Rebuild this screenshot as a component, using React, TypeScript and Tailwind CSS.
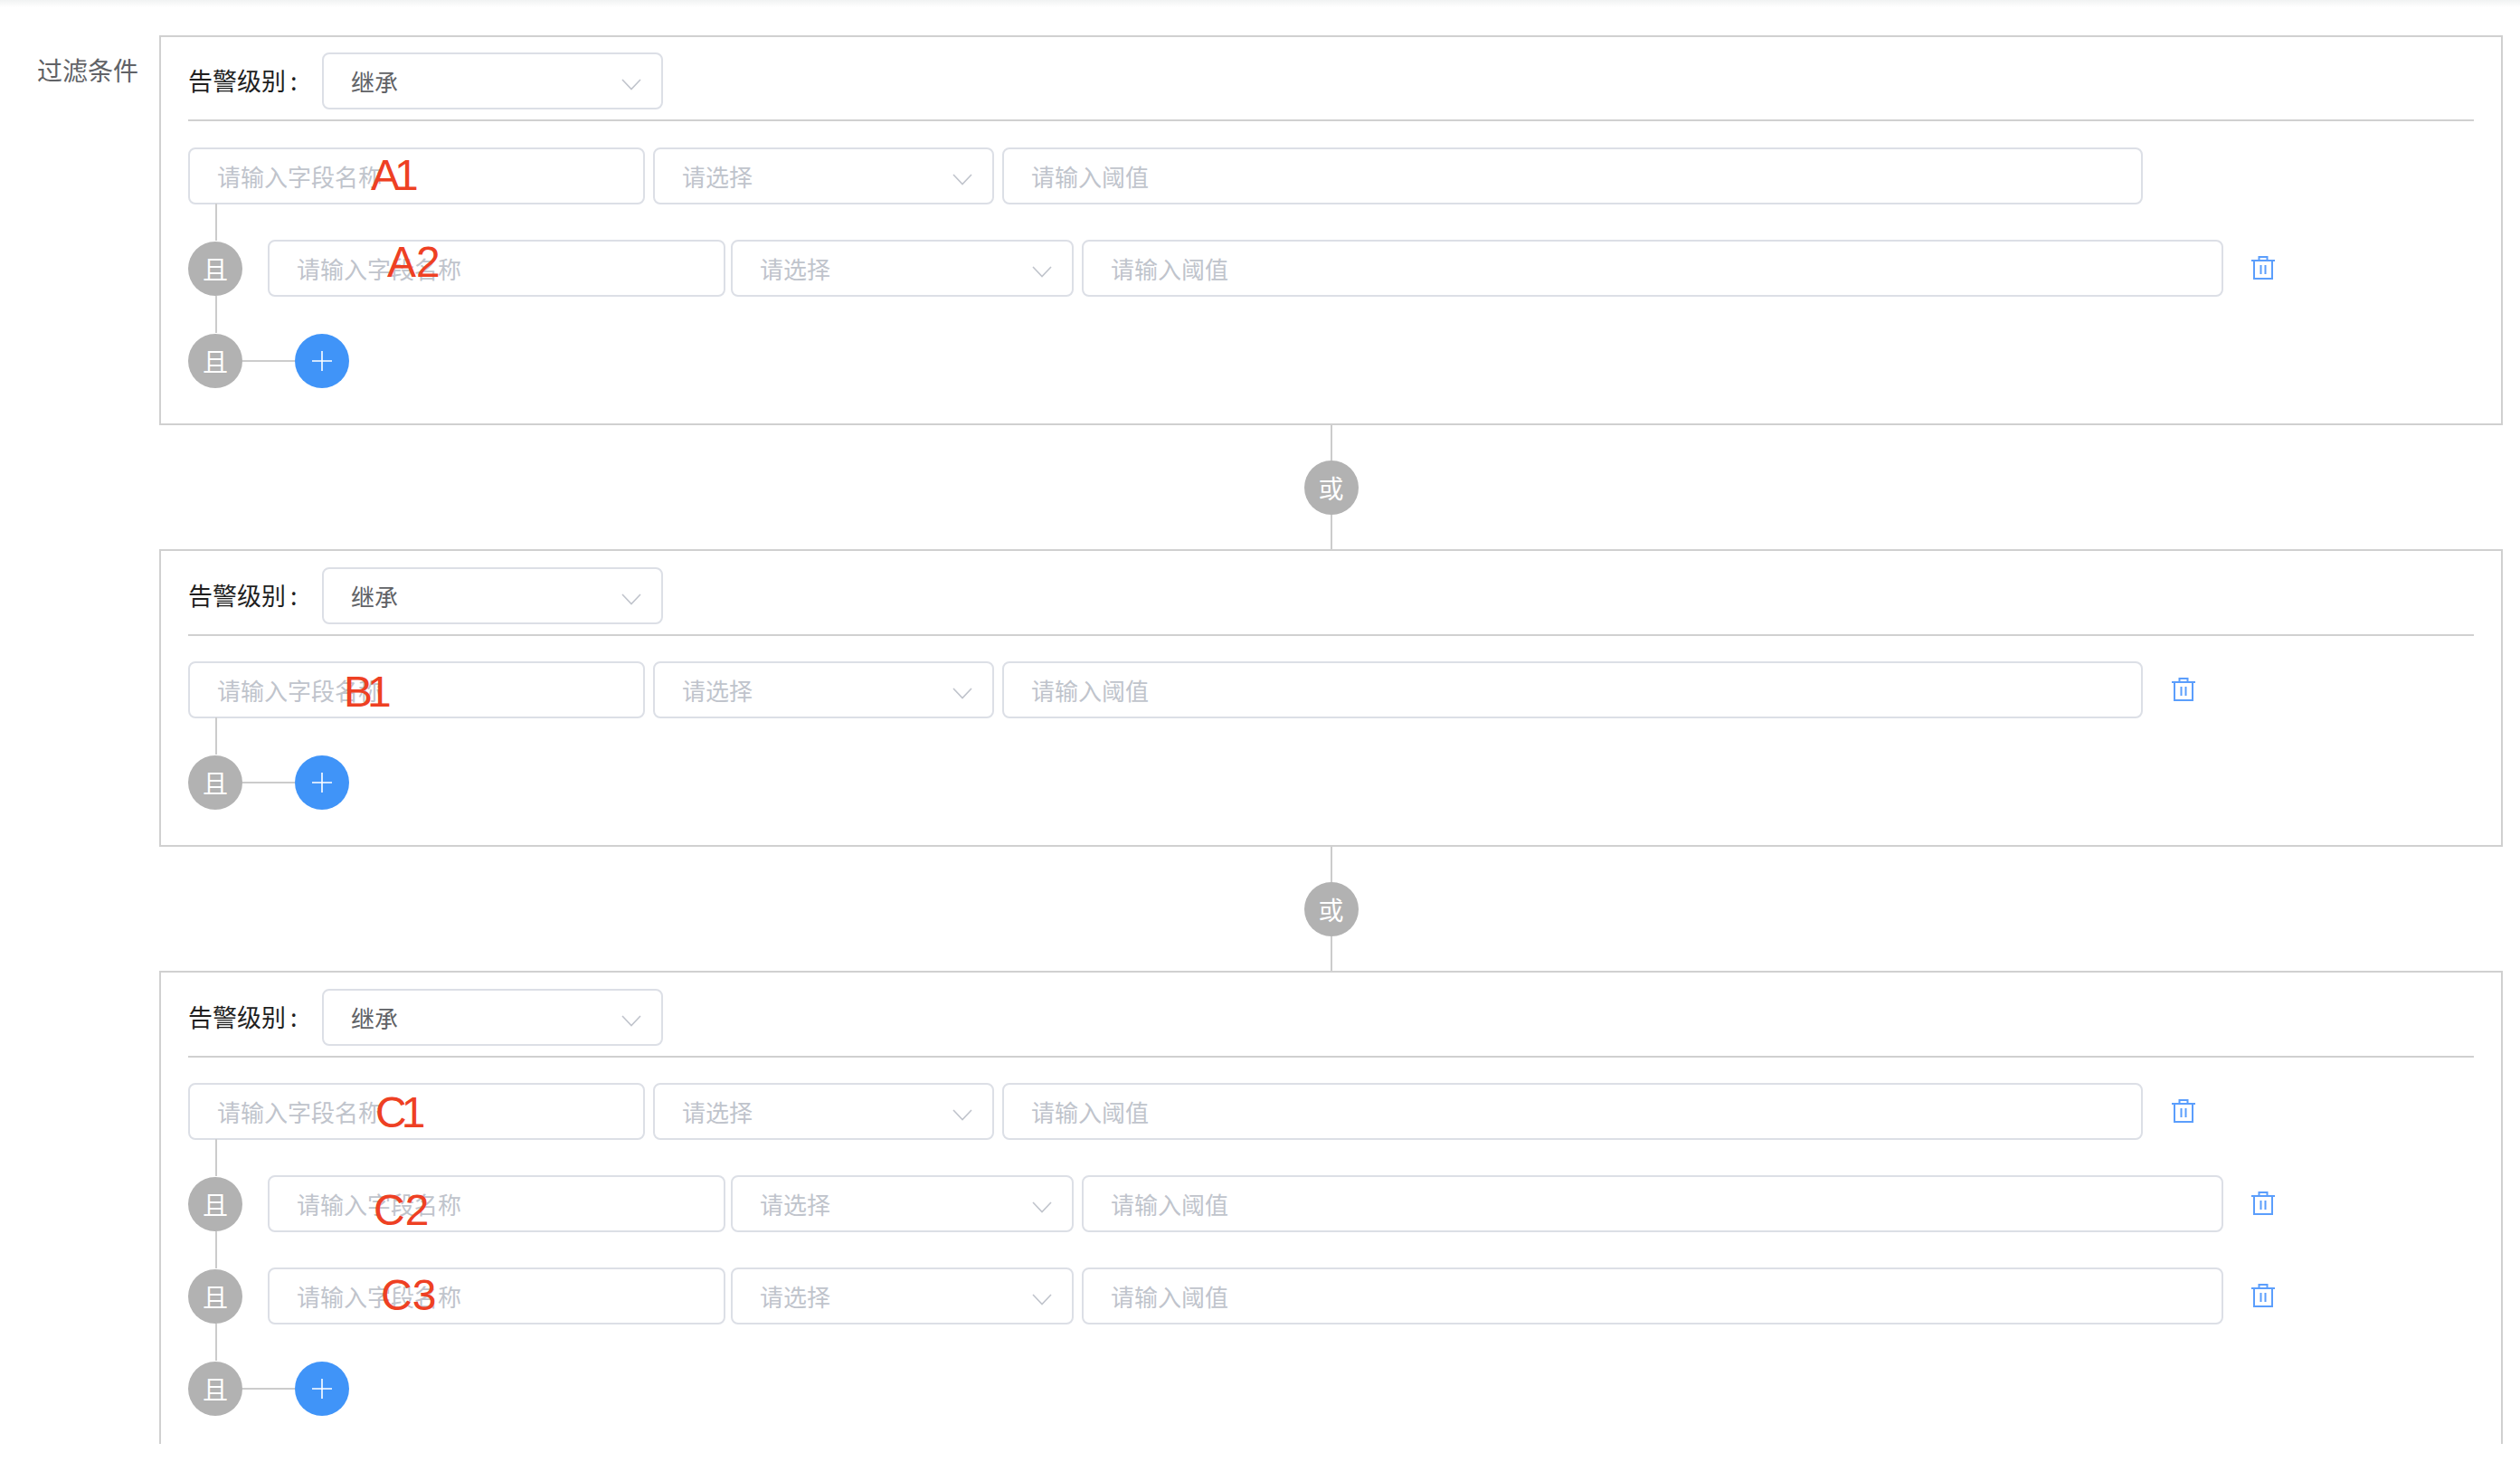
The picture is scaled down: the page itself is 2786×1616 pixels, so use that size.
const cjk = "font-['Noto_Sans_CJK_SC','Liberation_Sans',sans-serif]";

type Row = {
  note: string;
  noteClass: string;
  trash: boolean;
};

const groups: Row[][] = [
  [
    { note: "A1", noteClass: "left-[202px] top-[7px] tracking-[-6px]", trash: false },
    { note: "A2", noteClass: "left-[132px] top-[1px]", trash: true },
  ],
  [{ note: "B1", noteClass: "left-[172px] top-[10px] tracking-[-6px]", trash: true }],
  [
    { note: "C1", noteClass: "left-[207px] top-[9px] tracking-[-6px]", trash: true },
    { note: "C2", noteClass: "left-[117px] top-[15px]", trash: true },
    { note: "C3", noteClass: "left-[125px] top-[7px]", trash: true },
  ],
];

function Chevron() {
  return (
    <svg width="22" height="13" viewBox="0 0 22 13" fill="none" className="mt-[7px]">
      <path d="M1 1l10 10.5L21 1" stroke="#c0c4cc" strokeWidth="1.6" />
    </svg>
  );
}

function Trash() {
  return (
    <svg width="26" height="26" viewBox="0 0 26 26" fill="none" stroke="#5b9efc" strokeWidth="2">
      <path d="M0 5h26" />
      <path d="M8.5 5V1h9v4" />
      <path d="M3 5v20h20V5" />
      <path d="M10.5 10v10M15.5 10v10" />
    </svg>
  );
}

function Circle({ label }: { label: string }) {
  return (
    <div className="flex h-[60px] w-[60px] shrink-0 items-center justify-center rounded-full bg-[#b2b2b2] text-[28px] text-white">
      {label}
    </div>
  );
}

function Select({ text, className, muted }: { text: string; className: string; muted?: boolean }) {
  return (
    <div
      className={`flex h-[63px] shrink-0 items-center justify-between rounded-lg border-2 border-[#dcdfe6] bg-white pl-[30px] pr-[22px] text-[26px] ${
        muted ? "text-[#c0c4cc]" : "text-[#606266]"
      } ${className}`}
    >
      <span>{text}</span>
      <Chevron />
    </div>
  );
}

function TextInput({ placeholder, className }: { placeholder: string; className: string }) {
  return (
    <input
      readOnly
      placeholder={placeholder}
      className={`h-[63px] shrink-0 rounded-lg border-2 border-[#dcdfe6] bg-white px-[30px] text-[26px] outline-none placeholder:text-[#c0c4cc] ${className}`}
    />
  );
}

function Fields({ row, nested }: { row: Row; nested: boolean }) {
  return (
    <div className="flex items-center">
      <div className="relative shrink-0">
        <TextInput placeholder="请输入字段名称" className={`block ${nested ? "w-[506px]" : "w-[505px]"}`} />
        <span
          className={`absolute font-['Liberation_Sans',sans-serif] text-[48px] leading-[48px] text-[#ee4023] ${row.noteClass}`}
        >
          {row.note}
        </span>
      </div>
      <Select text="请选择" muted className={nested ? "ml-[6px] w-[379px]" : "ml-[9px] w-[377px]"} />
      <TextInput placeholder="请输入阈值" className={nested ? "ml-[9px] w-[1262px]" : "ml-[9px] w-[1261px]"} />
      {row.trash && (
        <button className={`-mt-[2px] shrink-0 ${nested ? "ml-[31px]" : "ml-[32px]"}`}>
          <Trash />
        </button>
      )}
    </div>
  );
}

function Link() {
  return <div className="relative z-0 -my-[1px] ml-[30px] h-[41px] w-[2px] bg-[#cccccc]" />;
}

function Group({ rows, first }: { rows: Row[]; first: boolean }) {
  return (
    <div className={`border-2 border-[#d0d0d0] pb-[38px] pl-[30px] pr-[30px] ${first ? "pt-[17px]" : "pt-[18px]"}`}>
      <div className="flex items-center border-b-2 border-[#d0d0d0] pb-[11px]">
        <span className="w-[148px] text-[27px] text-[#1f1f1f]">
          告警级别<span className="ml-[5px]">:</span>
        </span>
        <Select text="继承" className="w-[377px]" />
      </div>
      <div className={first ? "mt-[29px]" : "mt-[28px]"}>
        {rows.map((row, i) => (
          <div key={row.note}>
            {i === 0 ? (
              <Fields row={row} nested={false} />
            ) : (
              <div className="flex items-center">
                <div className="relative z-10">
                  <Circle label="且" />
                </div>
                <div className="ml-[28px]">
                  <Fields row={row} nested />
                </div>
              </div>
            )}
            <Link />
          </div>
        ))}
        <div className="flex h-[63px] items-center">
          <div className="relative z-10">
            <Circle label="且" />
          </div>
          <div className="h-[2px] w-[58px] bg-[#cccccc]" />
          <button className="flex h-[60px] w-[60px] items-center justify-center rounded-full bg-[#4094f8]">
            <svg width="24" height="24" viewBox="0 0 24 24" stroke="#ffffff" strokeWidth="1.6">
              <path d="M1 12h22M12 1v22" />
            </svg>
          </button>
        </div>
      </div>
    </div>
  );
}

function OrLink() {
  return (
    <div className="flex h-[137px] flex-col items-center">
      <div className="w-[2px] flex-1 bg-[#cccccc]" />
      <Circle label="或" />
      <div className="w-[2px] flex-1 bg-[#cccccc]" />
    </div>
  );
}

export default function App() {
  return (
    <div className={`h-[1616px] w-[2786px] overflow-hidden bg-white ${cjk}`}>
      <div className="h-[8px] bg-gradient-to-b from-[#f1f3f3] to-white" />
      <div className="flex h-[1588px] items-start overflow-hidden pl-[41px] pt-[31px]">
        <div className="w-[135px] shrink-0 pt-[20px] text-[28px] leading-[36px] text-[#606266]">过滤条件</div>
        <div className="w-[2591px] shrink-0">
          {groups.map((rows, i) => (
            <div key={i}>
              {i > 0 && <OrLink />}
              <Group rows={rows} first={i === 0} />
            </div>
          ))}
        </div>
      </div>
    </div>
  );
}
